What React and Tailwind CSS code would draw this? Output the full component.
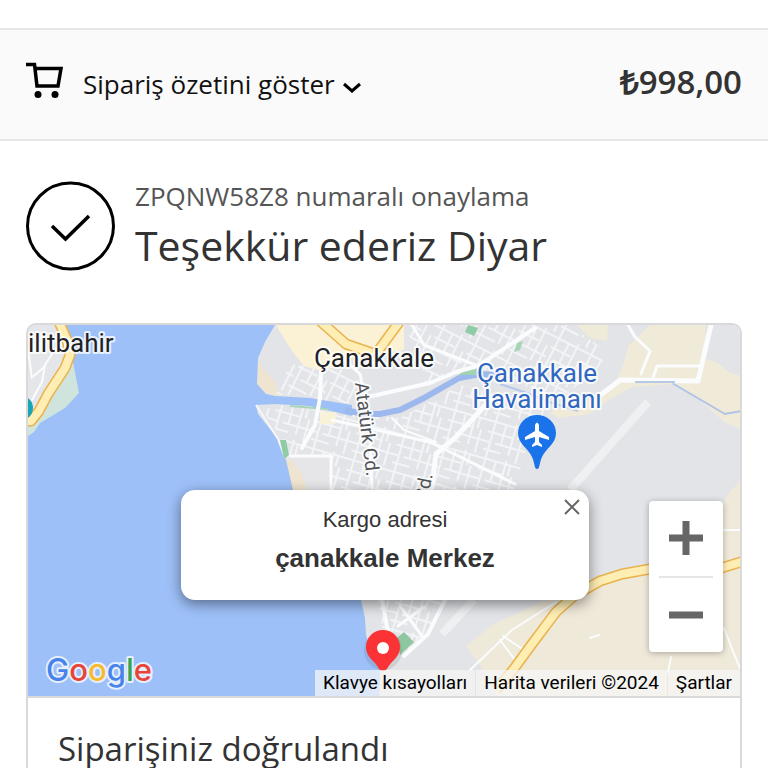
import React from "react";

const road = { fill: "none", stroke: "#fbfcfd", strokeLinecap: "round", strokeLinejoin: "round" };

function Highway({ d }) {
  return (
    <g fill="none" strokeLinejoin="round">
      <path d={d} stroke="#e9b24c" strokeWidth="11" />
      <path d={d} stroke="#ffeeb4" strokeWidth="8" />
    </g>
  );
}

function MapDrawing() {
  return (
    <svg
      className="block h-full w-full"
      viewBox="28 325 712 371"
      preserveAspectRatio="xMidYMid slice"
      aria-hidden="true"
    >
      <defs>
        <pattern id="streets" width="42" height="38" patternUnits="userSpaceOnUse" patternTransform="rotate(16)">
          <path
            d="M0 3H42M0 14H26M10 24H42M0 32H18M5 0V38M16 3V24M26 0V32M35 14V38M31 3V14M0 24H5"
            fill="none"
            stroke="#f3f4f6"
            strokeWidth="2"
          />
        </pattern>
        <pattern id="streetsNorth" width="36" height="44" patternUnits="userSpaceOnUse" patternTransform="rotate(27)">
          <path
            d="M0 4H36M0 15H22M8 26H36M0 36H20M4 0V44M15 4V26M24 0V36M32 15V44"
            fill="none"
            stroke="#f3f4f6"
            strokeWidth="2"
          />
        </pattern>
      </defs>

      <rect x="-400" y="0" width="1600" height="1000" fill="#e2e4e8" />

      {/* built-up areas */}
      <path d="M276 325H404V350L350 358L335 368L318 370L304 366L290 348Z" fill="#fbf2d6" />
      <path d="M258 362L266 372L274 380L279 396L266 393L257 384Z" fill="#efe4cf" />
      <path d="M286 458L331 456V500H296Z" fill="#e6e6e8" />
      <path d="M284 459L292 460L302 475L310 500H293Z" fill="#efe4cf" />
      <path d="M404 325H570L607 352L600 366L560 400L480 368L458 374L425 384L420 360Z" fill="url(#streetsNorth)" />
      <path d="M290 364L345 370L360 380L352 404L276 394Z" fill="url(#streetsNorth)" />
      <path d="M278 405L345 414L400 418L460 385L520 400L548 412L530 435L515 488L500 500H332V456H290L283 440L262 410Z" fill="url(#streets)" />
      <path d="M378 596H445L428 634L405 655L383 636Z" fill="url(#streets)" />
      <path d="M320 412H337L335 424H320Z" fill="#f8f2d9" />

      {/* open land */}
      <path d="M577 325H608L607 341L590 338Z" fill="#f0ead9" />
      <path d="M650 325H706L704 358L718 363L730 373L742 376V430L724 422L698 398L675 384L632 387L606 402L590 414L558 418L549 412L575 404L600 396L618 378L625 360L628 346Z" fill="#f0ead9" />
      <path d="M466 646L494 624L545 600L600 580L650 574L716 560L721 520L725 498L742 478V700H500L482 668Z" fill="#efe9d9" />

      {/* sea */}
      <path
        d="M-400 0H300V325H275L265 342L258 358L257 384L266 394L275 396L310 398L352 405L352 416L310 406L275 404L256 405L258 414L278 439L286 460L293 490L330 550L361 600L365 618L366 635L371 652L380 668L374 1000H-400Z"
        fill="#9dc0f8"
      />
      <path d="M256 405L278 439L285 458" stroke="#f4f6f8" strokeWidth="2" fill="none" />
      <path d="M345 410L364 414H380L400 410L422 399L459 378L480 374L500 375" fill="none" stroke="#9db8ec" strokeWidth="6" />
      <path d="M500 384L524 392L552 403L578 411" fill="none" stroke="#b3c8ec" strokeWidth="2" />
      <path d="M672 383L725 414L742 411" fill="none" stroke="#b0c4e6" strokeWidth="2" />

      {/* parks */}
      <path d="M280 440L286 440L289 455L284 459Z" fill="#8fcba4" />
      <path d="M457 376L465 370L477 368V375H461Z" fill="#9fd3b2" />
      <path d="M468 325L478 328L474 336L465 332Z" fill="#8fcba4" />
      <path d="M517 343L523 341L520 350L514 352Z" fill="#a5d6b7" />
      <path d="M290 406L328 409" stroke="#a5d6b7" strokeWidth="2" />
      <path d="M397 638L404 632L414 642L400 655Z" fill="#8fc8a0" />

      {/* streets */}
      <g {...road}>
        <path d="M321 372L320 398L315 425L302 448" strokeWidth="4" />
        <path d="M372 396L430 383L456 372L478 366L535 328" strokeWidth="4" />
        <path d="M490 400L455 438L436 454L430 500" strokeWidth="5" />
        <path d="M345 360L360 374L369 416L372 488" strokeWidth="3" />
        <path d="M412 325L424 345L478 366" strokeWidth="3" />
        <path d="M290 456H331V490" strokeWidth="3" />
        <path d="M332 420L430 442L515 484" strokeWidth="3" />
        <path d="M392 418L404 430L436 442" strokeWidth="2" />
        <path d="M602 394L620 380L698 381L711 325" strokeWidth="5" />
        <path d="M628 325L635 337L650 351L641 374" strokeWidth="3" />
        <path d="M653 378L657 366H702" strokeWidth="3" />
        <path d="M382 600L388 632" strokeWidth="4" />
        <path d="M445 600L428 634L404 656" strokeWidth="4" />
        <path d="M400 606L422 636M398 626L424 607" strokeWidth="3" />
        <path d="M470 670L512 630L556 602M503 636L524 650M500 640L515 660" strokeWidth="2" />
        <path d="M590 638L599 635M724 530H742M724 628L734 654L740 668M671 657L668 672" strokeWidth="2" />
      </g>
      <path d="M635 382H675" stroke="#b8c9e8" strokeWidth="2" />
      <path d="M570 490L648 402" stroke="#eff0f2" strokeWidth="8" />
      <path d="M442 634L474 600" stroke="#eff0f2" strokeWidth="8" />
      <Highway d="M320 321L346 344L372 353M400 321L378 351" />
      <Highway d="M496 690L513 670L532 644L556 612L574 596L600 581L622 574L650 569H718L744 561" />

      {/* Kilitbahir headland */}
      <path d="M0 325H62L73 362L79 393L65 408L40 423L34 432L28 436L0 440Z" fill="#cfe4dc" />
      <path d="M0 325H62L69 355L48 396L34 418L0 420Z" fill="#e4e6e9" />
      <path d="M52 354L43 368L34 376M45 365L42 382L32 400M28 350L32 378" {...road} strokeWidth="2" />
      <Highway d="M59 322L67 340L70 355L65 368L48 394L39 411L31 421H20" />
      <circle cx="21" cy="408" r="12" fill="#16a6b6" />

      {/* place names */}
      <g
        fontFamily="Roboto, sans-serif"
        stroke="#ffffff"
        strokeOpacity="0.8"
        strokeWidth="4"
        strokeLinejoin="round"
        style={{ paintOrder: "stroke" }}
      >
        <text x="28" y="352" fontSize="26" fill="#202124">ilitbahir</text>
        <text x="374" y="367" fontSize="26" textAnchor="middle" fill="#202124">Çanakkale</text>
        <text x="537" y="382" fontSize="26" textAnchor="middle" fill="#2f66c0">Çanakkale</text>
        <text x="537" y="408" fontSize="26" textAnchor="middle" fill="#2f66c0">Havalimanı</text>
        <text transform="translate(355 383) rotate(83)" fontSize="19" fill="#505357">Atatürk Cd.</text>
        <text transform="translate(427 502) rotate(-78)" fontSize="19" fill="#505357">Cd.</text>
      </g>

      {/* airport pin */}
      <path d="M537 469C534 469 535 463 532 457C528 448 518 444 518 433A19 18 0 0 1 556 433C556 444 546 448 542 457C539 463 540 469 537 469Z" fill="#1a73e8" />
      <path d="M535 425Q537 420 539 425V431L549 437V440L539 437V442L542 445V447L537 445L532 447V445L535 442V437L525 440V437L535 431Z" fill="#fff" />

      {/* address pin */}
      <ellipse cx="383" cy="650" rx="19" ry="20" fill="#3c4043" opacity="0.12" />
      <path d="M383 671C379 671 378 666 374 662C369 657 366 653 366 647A17 17 0 0 1 400 647C400 653 397 657 392 662C388 666 387 671 383 671Z" fill="#fb3336" />
      <circle cx="383" cy="648" r="6" fill="#fff" />
    </svg>
  );
}

function GoogleLogo() {
  return (
    <svg className="absolute bottom-0 left-4 h-[52px] w-[116px]" viewBox="0 0 116 52" role="img" aria-label="Google">
      <text
        x="2"
        y="37"
        fontFamily="Inter, sans-serif"
        fontWeight="500"
        fontSize="31"
        stroke="#e6effd"
        strokeWidth="4"
        strokeLinejoin="round"
        style={{ paintOrder: "stroke" }}
      >
        <tspan fill="#4683ea">G</tspan>
        <tspan fill="#e84538">o</tspan>
        <tspan fill="#f6bb2d">o</tspan>
        <tspan fill="#4683ea">g</tspan>
        <tspan fill="#36a452">l</tspan>
        <tspan fill="#e84538">e</tspan>
      </text>
    </svg>
  );
}

function SummaryBar() {
  return (
    <header className="mt-7 flex h-[113px] items-center justify-between border-y-2 border-[#e6e6e6] bg-[#fafafa] px-[26px] pb-[2px]">
      <button type="button" className="flex items-center text-black">
        <svg className="mr-5 mb-2 h-9 w-[37px]" viewBox="0 0 37 36" fill="none" stroke="#000" strokeWidth="3.500" aria-hidden="true">
          <path d="M0 2.500H8.500L11 24H32L35 6.500H9" />
          <circle cx="12" cy="32.500" r="3.500" fill="#000" stroke="none" />
          <circle cx="29" cy="32.500" r="3.500" fill="#000" stroke="none" />
        </svg>
        <span className="text-[26px] leading-9 text-[#111]">Sipariş özetini göster</span>
        <svg className="mt-2 ml-2 h-3 w-5" viewBox="0 0 20 12" fill="none" stroke="#000" strokeWidth="3" aria-hidden="true">
          <path d="M1 2L9 9L17 2" />
        </svg>
      </button>
      <span className="mb-1 text-[33px] leading-10 font-semibold text-[#333]">₺998,00</span>
    </header>
  );
}

function OrderMap() {
  return (
    <div className="relative h-[371px] overflow-hidden">
      <MapDrawing />
      <GoogleLogo />

      <section className="absolute top-[165px] left-1/2 w-[408px] -translate-x-[203px] rounded-[14px] bg-white pt-[17px] pb-[25px] text-center font-['Liberation_Sans',Arial,sans-serif] text-[#333] shadow-[0_4px_14px_rgba(0,0,0,0.45)]">
        <p className="text-[22px] leading-[26px]">Kargo adresi</p>
        <p className="mt-2 text-[26px] leading-[34px] font-bold">çanakkale Merkez</p>
        <button type="button" aria-label="Kapat" className="absolute top-2 right-2 p-px">
          <svg className="h-4 w-4" viewBox="0 0 16 16" fill="none" stroke="#666" strokeWidth="2" aria-hidden="true">
            <path d="M1 1L15 15M15 1L1 15" />
          </svg>
        </button>
      </section>

      <div className="absolute right-[17px] bottom-11 flex h-[151px] w-[74px] flex-col rounded-sm bg-white px-[10px] shadow-[0_1px_6px_rgba(0,0,0,0.3)]">
        <button type="button" aria-label="Yakınlaştır" className="flex flex-1 items-center justify-center border-b-2 border-[#e6e6e6]">
          <svg className="h-[34px] w-[34px]" viewBox="0 0 34 34" stroke="#666" strokeWidth="7" aria-hidden="true">
            <path d="M0 17H34M17 0V34" />
          </svg>
        </button>
        <button type="button" aria-label="Uzaklaştır" className="flex flex-1 items-center justify-center">
          <svg className="h-[34px] w-[34px]" viewBox="0 0 34 34" stroke="#666" strokeWidth="7" aria-hidden="true">
            <path d="M0 17H34" />
          </svg>
        </button>
      </div>

      <div className="absolute right-0 bottom-0 flex gap-px font-[Roboto,sans-serif] text-[19px] leading-[26px] text-black">
        <button type="button" className="bg-[#f5f5f5]/75 px-2">Klavye kısayolları</button>
        <span className="bg-[#f5f5f5]/75 px-2">Harita verileri ©2024</span>
        <a href="#sartlar" className="bg-[#f5f5f5]/75 px-2">Şartlar</a>
      </div>
    </div>
  );
}

export default function App() {
  return (
    <div className="flow-root min-h-screen bg-white font-['Open_Sans',sans-serif] text-[#333]">
      <SummaryBar />
      <main className="px-[26px]">
        <div className="flex items-center gap-5 pt-9">
          <svg className="h-[90px] w-[89px] shrink-0" viewBox="0 0 89 90" fill="none" stroke="#000" strokeWidth="3" aria-hidden="true">
            <circle cx="44.500" cy="45" r="43" />
            <path d="M26 45L39.500 58L63 35" strokeWidth="3.500" />
          </svg>
          <div>
            <p className="text-[26px] leading-[38px] text-[#555]">ZPQNW58Z8 numaralı onaylama</p>
            <h1 className="text-[41px] leading-[60px]">Teşekkür ederiz Diyar</h1>
          </div>
        </div>
        <section className="mt-12 overflow-hidden rounded-t-[10px] border-2 border-b-0 border-[#d9d9d9]">
          <OrderMap />
          <div className="border-t-2 border-[#d9d9d9] px-[30px] pt-7">
            <h2 className="text-[33px] leading-[46px]">Siparişiniz doğrulandı</h2>
          </div>
        </section>
      </main>
    </div>
  );
}
